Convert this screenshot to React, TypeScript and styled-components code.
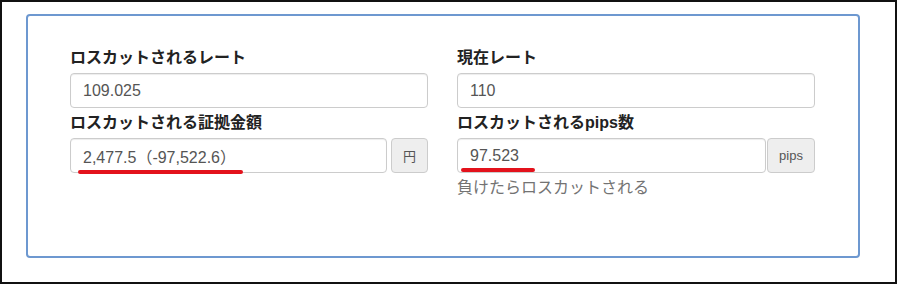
import React from "react";
import styled, { createGlobalStyle } from "styled-components";

const GlobalStyle = createGlobalStyle`
  html, body {
    margin: 0;
    padding: 0;
    background: #fff;
  }
  body {
    font-family: "Liberation Sans", "Noto Sans CJK JP", sans-serif;
  }
`;

const Frame = styled.div`
  box-sizing: border-box;
  width: 897px;
  height: 284px;
  border: 2px solid #111;
  padding: 12px 0 0 24px;
  background: #fff;
`;

const Panel = styled.div`
  box-sizing: border-box;
  width: 834px;
  height: 244px;
  border: 2px solid #6d98d0;
  border-radius: 4px;
  padding: 27px 41px 0 42px;
  display: grid;
  grid-template-columns: 358px 358px;
  column-gap: 29px;
  align-items: start;
`;

const Column = styled.div`
  display: flex;
  flex-direction: column;
`;

const Label = styled.label`
  display: block;
  font-size: 16px;
  font-weight: bold;
  line-height: 21px;
  color: #222;
  margin: 4px 0 5px;
`;

const Input = styled.div`
  box-sizing: border-box;
  flex: none;
  height: 35px;
  border: 1px solid #ccc;
  border-radius: 4px;
  padding: 0 12px;
  display: flex;
  align-items: center;
  font-size: 16px;
  color: #555;
  background: #fff;
  box-shadow: inset 0 1px 1px rgba(0, 0, 0, 0.075);
  white-space: nowrap;
`;

const InputGroup = styled.div<{ $gap: number }>`
  position: relative;
  display: flex;
  gap: ${(p) => p.$gap}px;

  & > ${Input} {
    flex: 1 1 auto;
    min-width: 0;
  }
`;

const Addon = styled.div<{ $width: number }>`
  box-sizing: border-box;
  flex: none;
  width: ${(p) => p.$width}px;
  height: 35px;
  border: 1px solid #ccc;
  border-radius: 4px;
  background: #eee;
  color: #555;
  font-size: 13px;
  display: flex;
  align-items: center;
  justify-content: center;
`;

const Underline = styled.span<{ $left: number; $top: number; $width: number }>`
  position: absolute;
  left: ${(p) => p.$left}px;
  top: ${(p) => p.$top}px;
  width: ${(p) => p.$width}px;
  height: 4px;
  border-radius: 2px;
  background: #e3121c;
`;

const Help = styled.p`
  margin: 5px 0 0;
  font-size: 16px;
  line-height: 20px;
  color: #737373;
`;

export default function App() {
  return (
    <>
      <GlobalStyle />
      <Frame>
        <Panel>
          <Column>
            <Label>ロスカットされるレート</Label>
            <Input>109.025</Input>
            <Label>ロスカットされる証拠金額</Label>
            <InputGroup $gap={4}>
              <Input>2,477.5（-97,522.6）</Input>
              <Addon $width={37}>円</Addon>
              <Underline $left={8} $top={32} $width={165} />
            </InputGroup>
          </Column>
          <Column>
            <Label>現在レート</Label>
            <Input>110</Input>
            <Label>ロスカットされるpips数</Label>
            <InputGroup $gap={1}>
              <Input>97.523</Input>
              <Addon $width={48}>pips</Addon>
              <Underline $left={4} $top={30} $width={74} />
            </InputGroup>
            <Help>負けたらロスカットされる</Help>
          </Column>
        </Panel>
      </Frame>
    </>
  );
}
